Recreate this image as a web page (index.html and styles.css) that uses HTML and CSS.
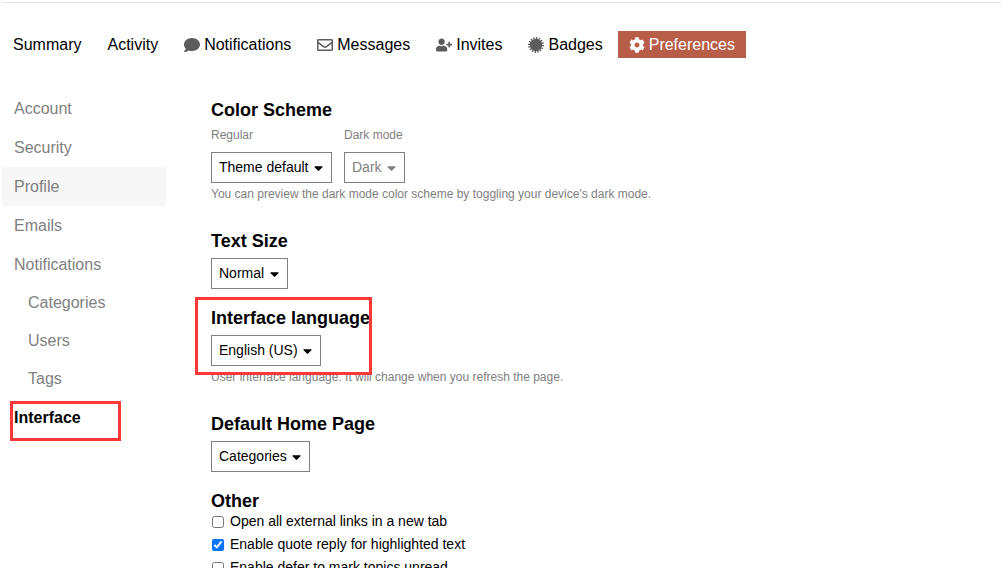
FILE: index.html
```html
<!DOCTYPE html>
<html lang="en">
<head>
  <meta charset="UTF-8" />
  <meta name="viewport" content="width=device-width, initial-scale=1.0">
  <title>Preferences - Interface</title>
  <link rel="stylesheet" href="styles.css">
</head>
<body>

  <div class="user-page">
    <nav class="user-nav" aria-label="User">
      <a href="#">Summary</a>
      <a href="#">Activity</a>
      <a href="#">
        <svg class="icon" viewBox="0 0 512 512"><path d="M256 32C114.6 32 0 125.1 0 240c0 49.6 21.4 95 57 130.7C44.5 421.1 2.7 466 2.2 466.5c-2.2 2.3-2.8 5.7-1.5 8.7S4.8 480 8 480c66.3 0 116-31.8 140.6-51.4 32.7 12.3 69 19.4 107.4 19.4 141.4 0 256-93.1 256-208S397.4 32 256 32z"/></svg>
        Notifications
      </a>
      <a href="#">
        <svg class="icon" viewBox="0 0 512 512"><path d="M464 64H48C21.49 64 0 85.49 0 112v288c0 26.51 21.49 48 48 48h416c26.51 0 48-21.49 48-48V112c0-26.51-21.49-48-48-48zm0 48v40.805c-22.422 18.259-58.168 46.651-134.587 106.49-16.841 13.247-50.201 45.072-73.413 44.701-23.208.375-56.579-31.459-73.413-44.701C106.18 199.465 70.425 171.067 48 152.805V112h416zM48 400V214.398c22.914 18.251 55.409 43.862 104.938 82.646 21.857 17.205 60.134 55.186 103.062 54.955 42.717.231 80.509-37.199 103.053-54.947 49.528-38.783 82.032-64.401 104.947-82.653V400H48z"/></svg>
        Messages
      </a>
      <a href="#">
        <svg class="icon" viewBox="0 0 640 512"><path d="M624 208h-64v-64c0-8.8-7.2-16-16-16h-32c-8.8 0-16 7.2-16 16v64h-64c-8.8 0-16 7.2-16 16v32c0 8.8 7.2 16 16 16h64v64c0 8.8 7.2 16 16 16h32c8.8 0 16-7.2 16-16v-64h64c8.8 0 16-7.2 16-16v-32c0-8.8-7.2-16-16-16zm-400 48c70.7 0 128-57.3 128-128S294.7 0 224 0 96 57.3 96 128s57.3 128 128 128zm89.6 32h-16.7c-22.2 10.2-46.9 16-72.9 16s-50.6-5.8-72.9-16h-16.7C60.2 288 0 348.2 0 422.4V464c0 26.5 21.5 48 48 48h352c26.5 0 48-21.5 48-48v-41.6c0-74.2-60.2-134.4-134.4-134.4z"/></svg>
        Invites
      </a>
      <a href="#">
        <svg class="icon" viewBox="-8 -8 16 16">
          <circle r="6.2"/>
          <circle class="teeth" r="6.9" pathLength="32"/>
        </svg>
        Badges
      </a>
      <a href="#" class="active">
        <svg class="icon" viewBox="0 0 512 512"><path d="M487.4 315.7l-42.6-24.6c4.3-23.2 4.3-47 0-70.2l42.6-24.6c4.9-2.8 7.1-8.6 5.5-14-11.1-35.6-30-67.8-54.7-94.6-3.8-4.1-10-5.1-14.8-2.3L380.8 110c-17.9-15.4-38.5-27.3-60.8-35.1V25.8c0-5.6-3.9-10.5-9.4-11.7-36.7-8.2-74.3-7.8-109.2 0-5.5 1.2-9.4 6.1-9.4 11.7V75c-22.2 7.9-42.8 19.8-60.8 35.1L88.7 85.5c-4.9-2.8-11-1.9-14.8 2.3-24.7 26.7-43.6 58.9-54.7 94.6-1.7 5.4.6 11.2 5.5 14L67.3 221c-4.3 23.2-4.3 47 0 70.2l-42.6 24.6c-4.9 2.8-7.1 8.6-5.5 14 11.1 35.6 30 67.8 54.7 94.6 3.8 4.1 10 5.1 14.8 2.3l42.6-24.6c17.9 15.4 38.5 27.3 60.8 35.1v49.2c0 5.6 3.9 10.5 9.4 11.7 36.7 8.2 74.3 7.8 109.2 0 5.5-1.2 9.4-6.1 9.4-11.7v-49.2c22.2-7.9 42.8-19.8 60.8-35.1l42.6 24.6c4.9 2.8 11 1.9 14.8-2.3 24.7-26.7 43.6-58.9 54.7-94.6 1.5-5.5-.7-11.3-5.6-14.1zM256 336c-44.1 0-80-35.9-80-80s35.9-80 80-80 80 35.9 80 80-35.9 80-80 80z"/></svg>
        Preferences
      </a>
    </nav>

    <div class="user-content">
      <nav class="side-nav" aria-label="Preferences">
        <a href="#">Account</a>
        <a href="#">Security</a>
        <a href="#" class="hovered">Profile</a>
        <a href="#">Emails</a>
        <a href="#">Notifications</a>
        <a href="#" class="indent">Categories</a>
        <a href="#" class="indent">Users</a>
        <a href="#" class="indent">Tags</a>
        <a href="#" class="active">Interface</a>
      </nav>

      <form class="preferences">
        <section>
          <h2>Color Scheme</h2>
          <div class="scheme-row">
            <div class="scheme">
              <label for="regularScheme">Regular</label>
              <div class="select-box">
                <select id="regularScheme"><option>Theme default</option></select>
                <svg class="caret" viewBox="0 0 320 512"><path d="M31.3 192h257.3c17.8 0 26.7 21.5 14.1 34.1L174.1 354.8c-7.8 7.8-20.5 7.8-28.3 0L17.2 226.1C4.6 213.5 13.5 192 31.3 192z"/></svg>
              </div>
            </div>
            <div class="scheme">
              <label for="darkScheme">Dark mode</label>
              <div class="select-box muted">
                <select id="darkScheme"><option>Dark</option></select>
                <svg class="caret" viewBox="0 0 320 512"><path d="M31.3 192h257.3c17.8 0 26.7 21.5 14.1 34.1L174.1 354.8c-7.8 7.8-20.5 7.8-28.3 0L17.2 226.1C4.6 213.5 13.5 192 31.3 192z"/></svg>
              </div>
            </div>
          </div>
          <p class="hint">You can preview the dark mode color scheme by toggling your device's dark mode.</p>
        </section>

        <section>
          <h2><label for="textSize">Text Size</label></h2>
          <div class="select-box">
            <select id="textSize"><option>Normal</option></select>
            <svg class="caret" viewBox="0 0 320 512"><path d="M31.3 192h257.3c17.8 0 26.7 21.5 14.1 34.1L174.1 354.8c-7.8 7.8-20.5 7.8-28.3 0L17.2 226.1C4.6 213.5 13.5 192 31.3 192z"/></svg>
          </div>
        </section>

        <section>
          <div class="language">
            <h2><label for="language">Interface language</label></h2>
            <div class="select-box">
              <select id="language"><option>English (US)</option></select>
              <svg class="caret" viewBox="0 0 320 512"><path d="M31.3 192h257.3c17.8 0 26.7 21.5 14.1 34.1L174.1 354.8c-7.8 7.8-20.5 7.8-28.3 0L17.2 226.1C4.6 213.5 13.5 192 31.3 192z"/></svg>
            </div>
          </div>
          <p class="hint">User interface language. It will change when you refresh the page.</p>
        </section>

        <section>
          <h2><label for="homePage">Default Home Page</label></h2>
          <div class="select-box">
            <select id="homePage"><option>Categories</option></select>
            <svg class="caret" viewBox="0 0 320 512"><path d="M31.3 192h257.3c17.8 0 26.7 21.5 14.1 34.1L174.1 354.8c-7.8 7.8-20.5 7.8-28.3 0L17.2 226.1C4.6 213.5 13.5 192 31.3 192z"/></svg>
          </div>
        </section>

        <section class="other">
          <h2>Other</h2>
          <label class="check"><input type="checkbox"> Open all external links in a new tab</label>
          <label class="check"><input type="checkbox" checked> Enable quote reply for highlighted text</label>
          <label class="check"><input type="checkbox"> Enable defer to mark topics unread</label>
        </section>
      </form>
    </div>
  </div>

</body>
</html>
```
FILE: styles.css
```css
:root {
  --primary: #000000;
  --muted: #808080;
  --icon: #5c5c5c;
  --accent: #b85e48;
  --hover-bg: #f7f7f7;
  --border: #e5e5e5;
  --mark: #fb3838;
}

* {
  box-sizing: border-box;
  margin: 0;
  padding: 0;
}

body {
  background-color: #ffffff;
  color: var(--primary);
  font-family: "Liberation Sans", Arial, sans-serif;
  font-size: 16px;
  line-height: 20px;
  height: 100vh;
  overflow: hidden;
}

a {
  color: inherit;
  text-decoration: none;
}

.user-page {
  margin: 2px 7px 0 2px;
  border-top: 1px solid var(--border);
}

/* Top navigation */
.user-nav {
  display: flex;
  gap: 4px;
  padding-top: 28px;
}

.user-nav a {
  display: flex;
  align-items: center;
  gap: 4px;
  height: 27px;
  padding: 0 11px;
}

.user-nav .active {
  background-color: var(--accent);
  color: #ffffff;
}

.icon {
  width: 16px;
  height: 16px;
  fill: var(--icon);
}

.icon .teeth {
  fill: none;
  stroke: var(--icon);
  stroke-width: 2;
  stroke-dasharray: 1 1;
}

.active .icon {
  fill: #ffffff;
}

.user-content {
  display: flex;
  align-items: flex-start;
  gap: 45px;
  padding-top: 31px;
}

/* Side navigation */
.side-nav {
  flex: 0 0 164px;
  color: var(--muted);
}

.side-nav a {
  display: block;
  padding: 0 12px;
  line-height: 39px;
}

.side-nav .indent {
  padding-left: 26px;
  line-height: 38px;
}

.side-nav .hovered {
  background-color: var(--hover-bg);
}

.side-nav .active {
  position: relative;
  color: var(--primary);
  font-weight: bold;
}

.side-nav .active::after,
.language::after {
  content: "";
  position: absolute;
  border: 3px solid var(--mark);
  pointer-events: none;
}

.side-nav .active::after {
  inset: 3px 45px -4px 8px;
}

/* Preferences form */
.preferences {
  flex: 1;
  display: flex;
  flex-direction: column;
  gap: 19px;
  padding-top: 11px;
}

h2 {
  font-size: 18px;
  line-height: 20px;
  margin-bottom: 7px;
}

.scheme-row {
  display: flex;
  gap: 12px;
}

.scheme label {
  display: block;
  color: var(--muted);
  font-size: 12px;
  line-height: 16px;
  margin-bottom: 9px;
}

.select-box {
  position: relative;
  width: fit-content;
}

.select-box select {
  display: block;
  appearance: none;
  height: 31px;
  padding: 0 22px 2px 7px;
  border: 1px solid var(--muted);
  border-radius: 0;
  background-color: transparent;
  color: var(--primary);
  font-family: inherit;
  font-size: 14px;
}

.select-box.muted select {
  color: var(--muted);
}

.caret {
  position: absolute;
  top: 9px;
  right: 9px;
  width: 9px;
  height: 14px;
  pointer-events: none;
}

.muted .caret {
  fill: var(--muted);
}

.hint {
  color: var(--muted);
  font-size: 12px;
  line-height: 16px;
  margin: 3px 0 10px;
}

.language {
  position: relative;
  width: fit-content;
}

.language::after {
  inset: -11px -2px -9px -16px;
}

.other h2 {
  margin-bottom: 0;
}

.check {
  display: flex;
  align-items: center;
  gap: 6px;
  margin-bottom: 3px;
  font-size: 14px;
}

.check input {
  width: 12px;
  height: 12px;
  margin: 2px 0 0 1px;
}
```
